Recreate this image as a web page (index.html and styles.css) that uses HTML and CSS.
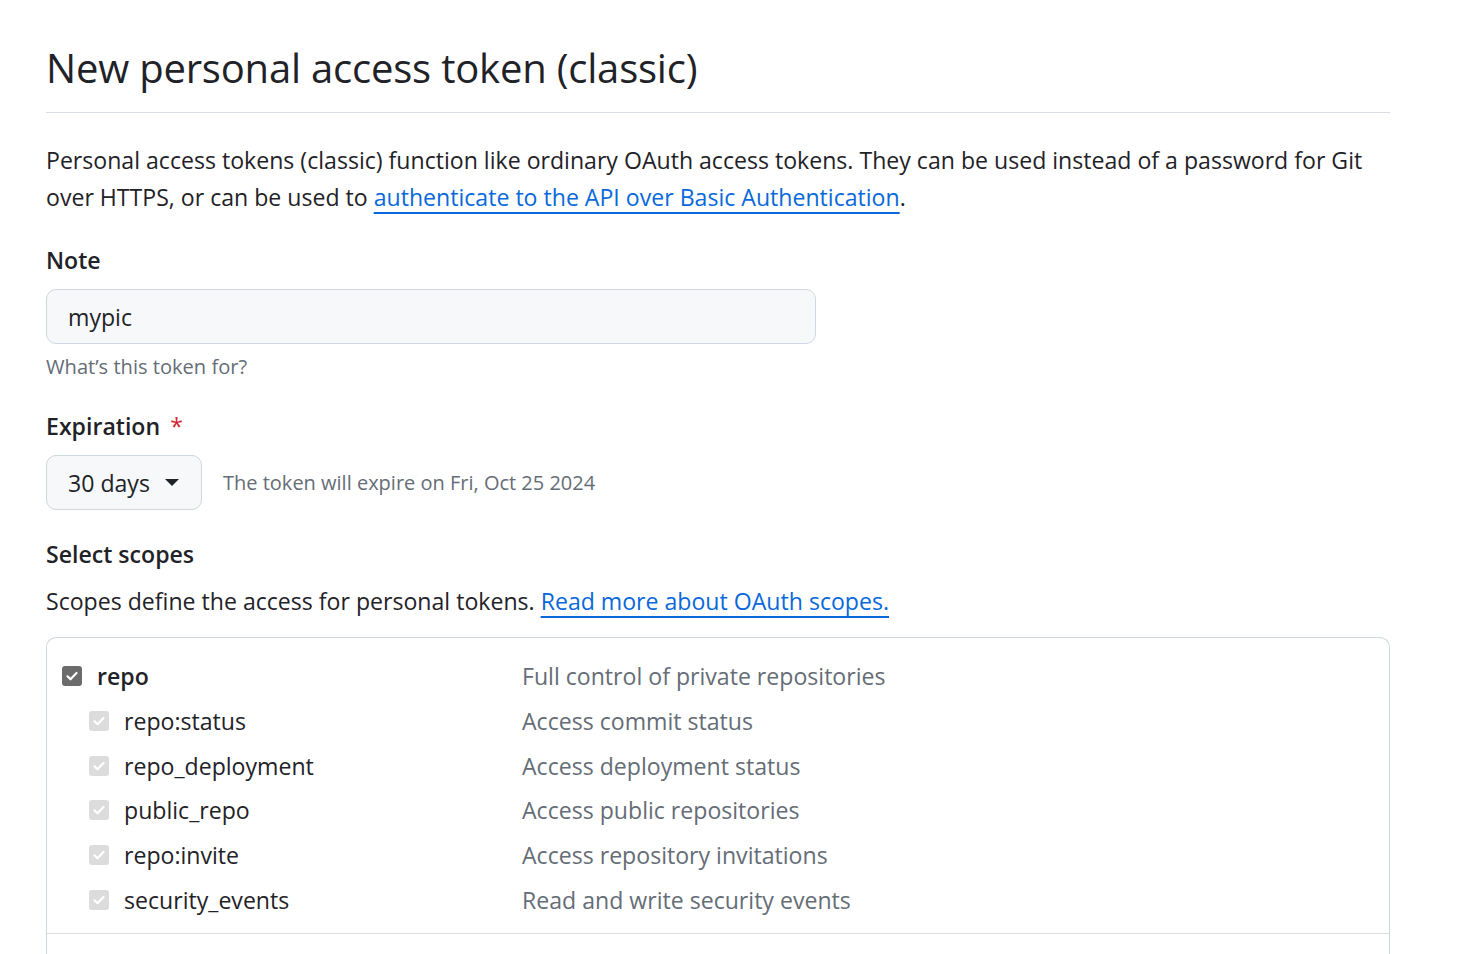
FILE: index.html
```html
<!DOCTYPE html>
<html lang="en">
<head>
<meta charset="utf-8">
<title>New personal access token (classic)</title>
<link rel="stylesheet" href="styles.css">
</head>
<body>
<main class="page">
  <h1 class="subhead">New personal access token (classic)</h1>
  <p class="lead">Personal access tokens (classic) function like ordinary OAuth access tokens. They can be used instead of a password for Git over HTTPS, or can be used to <a href="#" class="link">authenticate to the API over Basic Authentication</a>.</p>

  <div class="field">
    <label class="label">Note</label>
    <div class="input">mypic</div>
    <p class="note">What’s this token for?</p>
  </div>

  <div class="field">
    <label class="label">Expiration <span class="req">*</span></label>
    <div class="exp-row">
      <div class="select">30 days <span class="caret"></span></div>
      <span class="exp-note">The token will expire on Fri, Oct 25 2024</span>
    </div>
  </div>

  <div class="field">
    <label class="label">Select scopes</label>
    <p class="desc">Scopes define the access for personal tokens. <a href="#" class="link">Read more about OAuth scopes.</a></p>
  </div>

  <div class="scopes">
    <div class="group">
      <div class="row main">
        <div class="name"><span class="cb dark"><svg viewBox="0 0 16 16"><path d="M3.5 8.3l3 3 6-6.3" /></svg></span><strong>repo</strong></div>
        <div class="what">Full control of private repositories</div>
      </div>
      <div class="row sub">
        <div class="name"><span class="cb light"><svg viewBox="0 0 16 16"><path d="M3.5 8.3l3 3 6-6.3" /></svg></span>repo:status</div>
        <div class="what">Access commit status</div>
      </div>
      <div class="row sub">
        <div class="name"><span class="cb light"><svg viewBox="0 0 16 16"><path d="M3.5 8.3l3 3 6-6.3" /></svg></span>repo_deployment</div>
        <div class="what">Access deployment status</div>
      </div>
      <div class="row sub">
        <div class="name"><span class="cb light"><svg viewBox="0 0 16 16"><path d="M3.5 8.3l3 3 6-6.3" /></svg></span>public_repo</div>
        <div class="what">Access public repositories</div>
      </div>
      <div class="row sub">
        <div class="name"><span class="cb light"><svg viewBox="0 0 16 16"><path d="M3.5 8.3l3 3 6-6.3" /></svg></span>repo:invite</div>
        <div class="what">Access repository invitations</div>
      </div>
      <div class="row sub">
        <div class="name"><span class="cb light"><svg viewBox="0 0 16 16"><path d="M3.5 8.3l3 3 6-6.3" /></svg></span>security_events</div>
        <div class="what">Read and write security events</div>
      </div>
    </div>
    <div class="group next"></div>
  </div>
</main>
</body>
</html>
```

FILE: styles.css
```css
html, body {
  margin: 0;
  padding: 0;
  background: #ffffff;
}
body {
  font-family: "Open Sans", "Noto Sans", "Liberation Sans", sans-serif;
  color: #1f2328;
  font-size: 23.1px;
}
.page {
  width: 1344px;
  padding: 0 46px;
}
.subhead {
  margin: 36px 0 0;
  padding-bottom: 13px;
  font-size: 40px;
  font-weight: 400;
  line-height: 63px;
  letter-spacing: -0.2px;
  border-bottom: 1px solid #d8dee4;
}
.lead {
  margin: 29px 0 0;
  line-height: 37px;
}
.link {
  color: #0969da;
  text-decoration: underline;
  text-underline-offset: 6px;
  text-decoration-thickness: 1.5px;
}
.field {
  margin-top: 26px;
}
.label {
  display: block;
  font-weight: 600;
  line-height: 37px;
  margin-bottom: 10px;
}
.req {
  color: #d1242f;
  font-weight: 400;
  margin-left: 4px;
}
.input {
  box-sizing: border-box;
  width: 770px;
  height: 55px;
  border: 1px solid #d0d7de;
  border-radius: 10px;
  background: #f6f8fa;
  padding: 0 21px;
  display: flex;
  align-items: center;
  color: #1f2328;
}
.note {
  margin: 7px 0 0;
  font-size: 20.1px;
  line-height: 31px;
  color: #656d76;
}
.exp-row {
  display: flex;
  align-items: center;
  gap: 21px;
}
.select {
  box-sizing: border-box;
  height: 55px;
  width: 156px;
  border: 1px solid #d0d7de;
  border-radius: 10px;
  background: #f6f8fa;
  display: flex;
  align-items: center;
  padding: 0 21px;
  font-weight: 500;
}
.caret {
  display: inline-block;
  width: 0;
  height: 0;
  margin-left: 15px;
  border-left: 7px solid transparent;
  border-right: 7px solid transparent;
  border-top: 7px solid #1f2328;
}
.exp-note {
  font-size: 20px;
  color: #656d76;
}
.desc {
  margin: 0;
  line-height: 37px;
}
.scopes {
  margin-top: 17px;
  border: 1px solid #d0d7de;
  border-bottom: 0;
  border-radius: 10px 10px 0 0;
}
.group {
  padding: 16px 15px 11px;
  border-bottom: 1px solid #d8dee4;
}
.group.next {
  height: 60px;
  padding: 0;
  border-bottom: 0;
}
.row {
  display: flex;
  align-items: center;
  height: 44.7px;
}
.name {
  display: flex;
  align-items: center;
  width: 460px;
}
.row.sub .name {
  padding-left: 27px;
  width: 433px;
}
.name strong {
  font-weight: 600;
}
.what {
  color: #656d76;
}
.cb {
  box-sizing: border-box;
  width: 20px;
  height: 20px;
  border-radius: 3px;
  margin-right: 15px;
  display: inline-flex;
  align-items: center;
  justify-content: center;
  flex: none;
}
.cb svg {
  width: 16px;
  height: 16px;
  fill: none;
  stroke: #ffffff;
  stroke-width: 2.2;
  stroke-linecap: round;
  stroke-linejoin: round;
}
.cb.dark {
  background: #6b6b6b;
}
.cb.light {
  background: #dcdcdc;
}
```
